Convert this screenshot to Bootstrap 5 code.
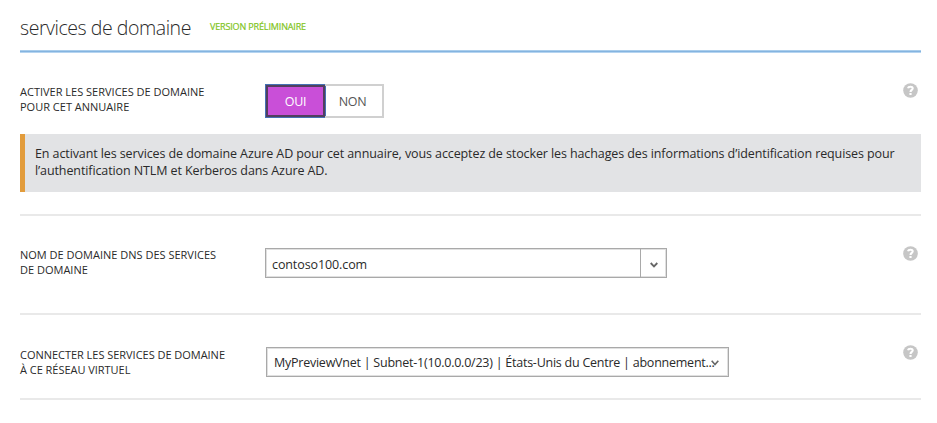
<!DOCTYPE html>
<html lang="fr">
<head>
<meta charset="utf-8">
<title>services de domaine</title>
<link href="https://cdn.jsdelivr.net/npm/bootstrap@5.3.0/dist/css/bootstrap.min.css" rel="stylesheet">
<style>
body{font-family:"Open Sans","Noto Sans",sans-serif;color:#2a2a2a;background:#fff;font-size:12.5px}
.page-box{width:901px;margin-left:20px}
.head-bar{height:53px;border-bottom:1px solid #b5d4f0;box-shadow:inset 0 -1px #84b4e0,inset 0 -2px #a9cdec;padding-top:14px}
.head-title{font-weight:300;font-size:19.5px;line-height:27px;letter-spacing:-.45px;margin:0;color:#2a2a2a;white-space:nowrap}
.preview-tag{font-size:9px;line-height:12px;letter-spacing:-.14px;color:#7fc41c;-webkit-text-stroke:.2px #7fc41c;margin:7px 0 0 19px;white-space:nowrap}
.setting{border-bottom:2px solid #e9e9e9}
.setting-toggle{height:163px}
.setting-dns{height:99px}
.setting-vnet{height:85px}
.setting-toggle>.d-flex{height:81px}
.setting-label{width:245px;font-size:11px;line-height:15px;white-space:nowrap}
.help-dot{width:15px;height:15px;margin-right:3px}
.toggle-opt{height:34px;line-height:31px;font-size:12.5px;letter-spacing:-.3px;border:2px solid #d0d0d0;border-radius:0;padding:0;text-align:center}
.toggle-on,.toggle-on:hover{width:61px;background:#c94fd8;color:#fff;border:1px solid #4571b5;box-shadow:inset 0 0 0 2px #51405f}
.toggle-off{width:59px;border-left:0;color:#555;padding-right:2px}
.notice{height:58px;background:#e2e3e5;border-left:5px solid #e29c3c;padding:11px 0 0 10px;line-height:17px;letter-spacing:-.1px;white-space:nowrap}
.field{height:30px;border:1px solid #a9a9a9;box-shadow:inset 0 0 0 1px #e0e0e0;line-height:17px;white-space:nowrap}
.field-dns{width:402px}
.field-vnet{width:463px;letter-spacing:-.24px}
.field-arrow{width:26px;border-left:1px solid #a9a9a9}
.label-a,.ctl-a{margin-top:31px}
.help-a{margin-top:30px}
.label-b{margin-top:31px}
.ctl-b{margin-top:32px}
.help-b{margin-top:30px}
.label-c{margin-top:32px;letter-spacing:-.03px}
.ctl-c{margin:32px 0 0 1px}
.help-c{margin-top:30px}
.dns-text{padding:7px 0 0 6px;letter-spacing:-.1px}
.vnet-text{padding:6px 0 0 7px}
.vnet-arrow{margin:12px 0 0 -4px}
</style>
</head>
<body>
<main class="page-box">
  <header class="head-bar d-flex">
    <h1 class="head-title">services de domaine</h1>
    <div class="preview-tag">VERSION PRÉLIMINAIRE</div>
  </header>

  <section class="setting setting-toggle">
    <div class="d-flex align-items-start">
      <div class="setting-label label-a">ACTIVER LES SERVICES DE DOMAINE<br>POUR CET ANNUAIRE</div>
      <div class="btn-group ctl-a" role="group">
        <button type="button" class="btn toggle-opt toggle-on">OUI</button>
        <button type="button" class="btn toggle-opt toggle-off">NON</button>
      </div>
      <svg class="help-dot help-a ms-auto" viewBox="0 0 15 15"><circle cx="7.5" cy="7.5" r="7.3" fill="#c6c6c6"/><path d="M5 5.2C5.4 3.3 9.9 3.2 9.7 5.5C9.6 6.9 7.6 7 7.5 9" fill="none" stroke="#fff" stroke-width="2.1"/><rect x="6.4" y="10" width="2.2" height="2" fill="#fff"/></svg>
    </div>
    <div class="notice">En activant les services de domaine Azure AD pour cet annuaire, vous acceptez de stocker les hachages des informations d’identification requises pour<br>l’authentification NTLM et Kerberos dans Azure AD.</div>
  </section>

  <section class="setting setting-dns">
    <div class="d-flex align-items-start">
      <div class="setting-label label-b">NOM DE DOMAINE DNS DES SERVICES<br>DE DOMAINE</div>
      <div class="field field-dns ctl-b d-flex">
        <div class="flex-grow-1 dns-text">contoso100.com</div>
        <div class="field-arrow d-flex align-items-center justify-content-center"><svg class="mt-1" width="8" height="6" viewBox="0 0 8 6"><path d="M.7 1L4 4.4L7.3 1" fill="none" stroke="#666" stroke-width="1.8"/></svg></div>
      </div>
      <svg class="help-dot help-b ms-auto" viewBox="0 0 15 15"><circle cx="7.5" cy="7.5" r="7.3" fill="#c6c6c6"/><path d="M5 5.2C5.4 3.3 9.9 3.2 9.7 5.5C9.6 6.9 7.6 7 7.5 9" fill="none" stroke="#fff" stroke-width="2.1"/><rect x="6.4" y="10" width="2.2" height="2" fill="#fff"/></svg>
    </div>
  </section>

  <section class="setting setting-vnet">
    <div class="d-flex align-items-start">
      <div class="setting-label label-c">CONNECTER LES SERVICES DE DOMAINE<br>À CE RÉSEAU VIRTUEL</div>
      <div class="field field-vnet ctl-c d-flex">
        <div class="vnet-text">MyPreviewVnet | Subnet-1(10.0.0.0/23) | États-Unis du Centre | abonnement...</div>
        <svg class="vnet-arrow" width="8" height="6" viewBox="0 0 8 6"><path d="M.7 .8L4 4.6L7.3 .8" fill="none" stroke="#666" stroke-width="1.6"/></svg>
      </div>
      <svg class="help-dot help-c ms-auto" viewBox="0 0 15 15"><circle cx="7.5" cy="7.5" r="7.3" fill="#c6c6c6"/><path d="M5 5.2C5.4 3.3 9.9 3.2 9.7 5.5C9.6 6.9 7.6 7 7.5 9" fill="none" stroke="#fff" stroke-width="2.1"/><rect x="6.4" y="10" width="2.2" height="2" fill="#fff"/></svg>
    </div>
  </section>
</main>
<script src="https://cdn.jsdelivr.net/npm/bootstrap@5.3.0/dist/js/bootstrap.bundle.min.js"></script>
</body>
</html>
